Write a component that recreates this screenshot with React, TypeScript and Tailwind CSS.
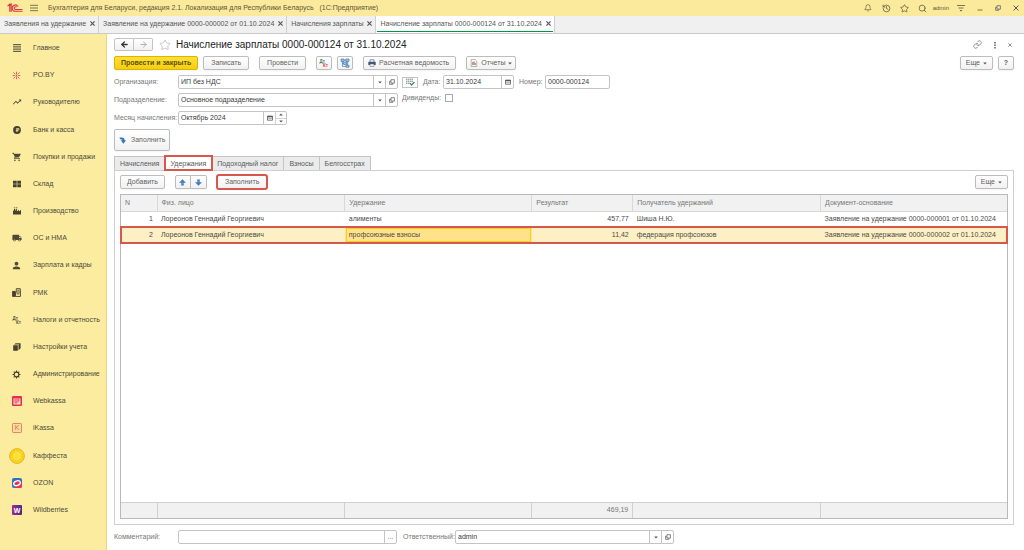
import { useState } from "react"
import type { ReactNode } from "react"
import clsx from "clsx"
import { ArrowLeft, ArrowRight, Bell, History, Link, Search, Star } from "lucide-react"
import { MdLocalShipping, MdPerson, MdShoppingCart, MdTrendingUp } from "react-icons/md"

interface Deduction {
  id: number
  person: string
  kind: string
  amount: string
  receiver: string
  basis: string
}

const deductions: Deduction[] = [
  {
    id: 1,
    person: "Лореонов Геннадий Георгиевич",
    kind: "алименты",
    amount: "457,77",
    receiver: "Шиша Н.Ю.",
    basis: "Заявление на удержание 0000-000001 от 01.10.2024",
  },
  {
    id: 2,
    person: "Лореонов Геннадий Георгиевич",
    kind: "профсоюзные взносы",
    amount: "11,42",
    receiver: "федерация профсоюзов",
    basis: "Заявление на удержание 0000-000002 от 01.10.2024",
  },
]

const windowTabs = [
  "Заявления на удержание",
  "Заявление на удержание 0000-000002 от 01.10.2024",
  "Начисления зарплаты",
  "Начисление зарплаты 0000-000124 от 31.10.2024",
]

const sections: { label: string; icon: ReactNode }[] = [
  { label: "Главное", icon: <MenuLinesIcon /> },
  { label: "PO.BY", icon: <BurstIcon /> },
  { label: "Руководителю", icon: <MdTrendingUp className="size-[10px]" /> },
  { label: "Банк и касса", icon: <CoinIcon /> },
  { label: "Покупки и продажи", icon: <MdShoppingCart className="size-[10px]" /> },
  { label: "Склад", icon: <WarehouseIcon /> },
  { label: "Производство", icon: <FactoryIcon /> },
  { label: "ОС и НМА", icon: <MdLocalShipping className="size-[10px]" /> },
  { label: "Зарплата и кадры", icon: <MdPerson className="size-[11px]" /> },
  { label: "РМК", icon: <RegisterIcon /> },
  { label: "Налоги и отчетность", icon: <DtKtIcon /> },
  { label: "Настройки учета", icon: <BooksIcon /> },
  { label: "Администрирование", icon: <GearIcon /> },
  { label: "Webkassa", icon: <WebkassaIcon /> },
  { label: "iKassa", icon: <IkassaIcon /> },
  { label: "Каффеста", icon: <KaffestaIcon /> },
  { label: "OZON", icon: <OzonIcon /> },
  { label: "Wildberries", icon: <WildberriesIcon /> },
]

const docTabs = ["Начисления", "Удержания", "Подоходный налог", "Взносы", "Белгосстрах"]

export default function App() {
  const [activeTab, setActiveTab] = useState("Удержания")
  const [selected, setSelected] = useState(2)

  return (
    <div className="flex min-h-screen flex-col bg-white font-['Liberation_Sans',Arial,sans-serif] text-[7px] leading-[10px] text-[#4a4a4a]">
      <TitleBar />
      <WindowTabs />
      <div className="flex flex-1">
        <Sidebar />
        <main className="flex min-w-0 flex-1 flex-col pt-1 pr-[10px] pb-[6px] pl-[7px]">
          <DocumentHeader />
          <CommandBar />
          <DocumentFields />

          <div className="mt-1">
            <button className="flex h-[22px] items-center gap-[5px] rounded-xs border border-[#bdbdbd] bg-linear-to-b from-white to-[#f1f1f1] px-1 text-[#666] shadow-xs">
              <FillIcon />
              <span>Заполнить</span>
            </button>
          </div>

          <div className="mt-[5px] flex" role="tablist">
            {docTabs.map((tab, i) => (
              <button
                key={tab}
                role="tab"
                aria-selected={tab === activeTab}
                onClick={() => setActiveTab(tab)}
                className={clsx(
                  "h-[14px] border-t border-r border-[#c4c4c4] px-[5px] text-[#5a5a5a]",
                  i === 0 && "border-l",
                  tab === activeTab
                    ? "relative z-10 bg-white outline-2 -outline-offset-1 outline-[#d8574c]"
                    : "bg-[#ebebeb]"
                )}
              >
                {tab}
              </button>
            ))}
          </div>

          <section className="flex flex-1 flex-col border border-[#cfcfcf] px-[5px] pt-1 pb-[5px]">
            <div className="flex items-center">
              <Button className="px-[6px]">Добавить</Button>
              <div className="ml-[10px] flex">
                <button aria-label="Вверх" className="flex h-[14px] w-4 items-center justify-center rounded-l-xs border border-[#bdbdbd] bg-linear-to-b from-white to-[#f1f1f1] shadow-xs">
                  <MoveIcon />
                </button>
                <button aria-label="Вниз" className="flex h-[14px] w-4 items-center justify-center rounded-r-xs border border-l-0 border-[#bdbdbd] bg-linear-to-b from-white to-[#f1f1f1] shadow-xs">
                  <MoveIcon className="rotate-180" />
                </button>
              </div>
              <Button className="ml-[10px] outline-2 -outline-offset-1 outline-[#d8574c]">Заполнить</Button>
              <Button className="ml-auto px-[5px]">
                Еще <Caret />
              </Button>
            </div>
            <DeductionsTable selected={selected} onSelect={setSelected} />
          </section>

          <div className="mt-[5px] flex items-center">
            <label htmlFor="comment" className="w-16 text-[#777]">Комментарий:</label>
            <Field id="comment" className="w-[219px]">
              <FieldButton label="Выбрать комментарий">...</FieldButton>
            </Field>
            <label htmlFor="responsible" className="ml-[6px] w-[52px] text-[#777]">Ответственный:</label>
            <Field id="responsible" value="admin" className="w-[219px]">
              <FieldButton label="Выбрать"><Caret /></FieldButton>
              <FieldButton label="Открыть"><OpenIcon /></FieldButton>
            </Field>
          </div>
        </main>
      </div>
    </div>
  )
}

function TitleBar() {
  return (
    <header className="flex h-4 items-center bg-[#fbea9c] pr-[5px] pl-[7px]">
      <LogoIcon />
      <button aria-label="Меню" className="ml-[7px]">
        <svg viewBox="0 0 8 8" className="size-2" stroke="#6b6446" strokeWidth="0.9">
          <path d="M0 1.3h8M0 4h8M0 6.7h8" />
        </svg>
      </button>
      <span className="ml-[10px] text-[#5c5538]">
        Бухгалтерия для Беларуси, редакция 2.1. Локализация для Республики Беларусь&nbsp;&nbsp; (1С:Предприятие)
      </span>
      <div className="ml-auto flex items-center text-[#5c5538]">
        <button aria-label="Уведомления" className="mr-[10px]"><Bell className="size-2" /></button>
        <button aria-label="История" className="mr-[9px]"><History className="size-[9px]" /></button>
        <button aria-label="Избранное" className="mr-[9px]"><Star className="size-[9px]" /></button>
        <button aria-label="Поиск" className="mr-[6px]"><Search className="size-[9px]" /></button>
        <span className="mr-2 text-[6px]">admin</span>
        <button aria-label="Сервис" className="mr-3">
          <svg viewBox="0 0 8 8" className="size-2" fill="none" stroke="currentColor" strokeWidth="0.8">
            <path d="M0 1.5h8M1.5 4h5" />
            <path d="M2.6 6h2.8L4 7.6z" fill="currentColor" stroke="none" />
          </svg>
        </button>
        <button aria-label="Свернуть" className="mr-3">
          <svg viewBox="0 0 6 6" className="size-[6px]" stroke="currentColor" strokeWidth="0.8"><path d="M0.5 5h5" /></svg>
        </button>
        <button aria-label="Развернуть" className="mr-3"><OpenIcon /></button>
        <button aria-label="Закрыть"><CrossIcon className="size-[6px]" /></button>
      </div>
    </header>
  )
}

function WindowTabs() {
  return (
    <nav className="flex h-[18px] border-b border-[#c9c9c9] bg-[#f0f0f0]">
      {windowTabs.map((tab, i) => {
        const active = i === windowTabs.length - 1
        return (
          <div key={tab} className={clsx("flex border-r border-[#cfcfcf] px-px", active && "bg-white")}>
            <div className={clsx("mb-px flex items-center gap-1 border-b pr-[2px] pl-[3px]", active ? "border-[#009646]" : "border-transparent")}>
              <a href="#" className="text-[#555]">{tab}</a>
              <button aria-label={`Закрыть ${tab}`}>
                <CrossIcon className="size-[5px]" bold />
              </button>
            </div>
          </div>
        )
      })}
    </nav>
  )
}

function Sidebar() {
  return (
    <aside className="flex w-[107px] shrink-0 flex-col border-r border-[#ead67e] bg-[#fbec9f]">
      <ul className="flex flex-1 flex-col justify-between pt-[2px] pb-7">
        {sections.map((section) => (
          <li key={section.label}>
            <a href="#" className="flex h-6 items-center whitespace-nowrap text-[#4d4938]">
              <span className="flex w-[33px] justify-center">{section.icon}</span>
              {section.label}
            </a>
          </li>
        ))}
      </ul>
    </aside>
  )
}

function DocumentHeader() {
  return (
    <div className="flex h-[13px] items-center">
      <div className="flex">
        <button aria-label="Назад" className="flex h-[13px] w-5 items-center justify-center rounded-l-xs border border-[#c4c4c4] bg-linear-to-b from-white to-[#f1f1f1]">
          <ArrowLeft className="size-[9px] text-[#333]" strokeWidth={3.5} />
        </button>
        <button aria-label="Вперед" className="flex h-[13px] w-[19px] items-center justify-center rounded-r-xs border border-l-0 border-[#c4c4c4] bg-linear-to-b from-white to-[#f1f1f1]">
          <ArrowRight className="size-[9px] text-[#aaa]" strokeWidth={2.5} />
        </button>
      </div>
      <button aria-label="В избранное" className="ml-[6px]">
        <Star className="size-3 text-[#b5b5b5]" strokeWidth={1.5} />
      </button>
      <h1 className="ml-[5px] text-[10px] leading-3 text-[#222]">Начисление зарплаты 0000-000124 от 31.10.2024</h1>
      <div className="ml-auto flex items-center gap-3 text-[#777]">
        <button aria-label="Получить ссылку"><Link className="size-[9px]" /></button>
        <button aria-label="Действия">
          <svg viewBox="0 0 2 8" className="h-2 w-[2px]" fill="#555">
            <path d="M0.3 1h1.4v1.4H0.3zM0.3 3.5h1.4v1.4H0.3zM0.3 6h1.4v1.4H0.3z" />
          </svg>
        </button>
        <button aria-label="Закрыть документ" className="mr-[2px]"><CrossIcon className="size-1" /></button>
      </div>
    </div>
  )
}

function CommandBar() {
  return (
    <div className="mt-[5px] flex items-center">
      <button className="h-[14px] rounded-xs border border-[#d9b700] bg-linear-to-b from-[#ffe033] to-[#f7cd0a] px-[6px] font-bold text-[#5e5113] shadow-xs">
        Провести и закрыть
      </button>
      <Button className="ml-[5px]">Записать</Button>
      <Button className="ml-[10px]">Провести</Button>
      <Button className="ml-[10px] w-4 px-0" label="Проводки"><DtKtIcon colored /></Button>
      <Button className="ml-[5px] w-4 px-0" label="Структура подчиненности"><StructureIcon /></Button>
      <Button className="ml-[10px] px-1"><PrinterIcon /> <span className="pr-[2px]">Расчетная ведомость</span></Button>
      <Button className="ml-[10px] px-[3px]"><ReportIcon /> Отчеты <Caret /></Button>
      <Button className="ml-auto px-[5px]">Еще <Caret /></Button>
      <Button className="ml-[5px] w-4 px-0 font-bold" label="Справка">?</Button>
    </div>
  )
}

function DocumentFields() {
  return (
    <div className="mt-[5px] flex gap-1">
      <div className="flex flex-col gap-1">
        <div className="flex items-center">
          <label htmlFor="org" className="w-16 text-[#777]">Организация:</label>
          <Field id="org" value="ИП без НДС" className="w-[220px]">
            <FieldButton label="Выбрать организацию"><Caret /></FieldButton>
            <FieldButton label="Открыть организацию"><OpenIcon /></FieldButton>
          </Field>
        </div>
        <div className="flex items-center">
          <label htmlFor="dept" className="w-16 text-[#777]">Подразделение:</label>
          <Field id="dept" value="Основное подразделение" className="w-[220px]">
            <FieldButton label="Выбрать подразделение"><Caret /></FieldButton>
            <FieldButton label="Открыть подразделение"><OpenIcon /></FieldButton>
          </Field>
        </div>
        <div className="flex items-center">
          <label htmlFor="month" className="w-16 whitespace-nowrap text-[#777]">Месяц начисления:</label>
          <Field id="month" value="Октябрь 2024" className="w-[109px]">
            <FieldButton label="Календарь"><CalendarIcon /></FieldButton>
            <div className="flex w-[11px] flex-col border-l border-[#d0d0d0]">
              <button aria-label="Следующий месяц" className="flex flex-1 items-center justify-center border-b border-[#d0d0d0]">
                <Caret className="rotate-180" />
              </button>
              <button aria-label="Предыдущий месяц" className="flex flex-1 items-center justify-center">
                <Caret />
              </button>
            </div>
          </Field>
        </div>
      </div>

      <div className="flex flex-col gap-[2px]">
        <div className="flex items-center">
          <button aria-label="Заполнение документа" className="flex h-[11px] w-4 items-center justify-center border border-[#c4c4c4] bg-white">
            <ListCheckIcon />
          </button>
          <label htmlFor="date" className="ml-[5px] w-5 text-[#777]">Дата:</label>
          <Field id="date" value="31.10.2024" className="w-[71px]">
            <FieldButton label="Календарь"><CalendarIcon /></FieldButton>
          </Field>
          <label htmlFor="number" className="ml-[5px] w-[26px] text-[#777]">Номер:</label>
          <Field id="number" value="0000-000124" className="w-[65px]" />
        </div>
        <div className="flex h-[14px] items-center gap-1">
          <label htmlFor="dividends" className="text-[#777]">Дивиденды:</label>
          <input id="dividends" type="checkbox" className="size-2 appearance-none border border-[#aaa] bg-white checked:bg-[#1a9a5c]" />
        </div>
      </div>
    </div>
  )
}

function DeductionsTable({ selected, onSelect }: { selected: number; onSelect: (id: number) => void }) {
  return (
    <div className="mt-[5px] grid flex-1 border border-[#b9b9b9]">
      <table className="h-full w-full table-fixed border-collapse text-left">
        <colgroup>
          <col className="w-9" />
          <col className="w-[21.2%]" />
          <col className="w-[21.1%]" />
          <col className="w-[11.4%]" />
          <col className="w-[21.2%]" />
          <col />
        </colgroup>
        <thead>
          <tr className="h-4 bg-[#f1f1f1] text-[#777]">
            {["N", "Физ. лицо", "Удержание", "Результат", "Получатель удержаний", "Документ-основание"].map((title) => (
              <th key={title} className="border-r border-b border-[#d8d8d8] px-1 py-0 font-normal last:border-r-0">
                {title}
              </th>
            ))}
          </tr>
        </thead>
        <tbody>
          {deductions.map((row) => {
            const active = row.id === selected
            return (
              <tr
                key={row.id}
                onClick={() => onSelect(row.id)}
                className={clsx("h-4", active && "bg-[#fdf0c4] outline-2 -outline-offset-1 outline-[#d8574c]")}
              >
                <td className="px-1 py-0 text-right">{row.id}</td>
                <td className="px-1 py-0">{row.person}</td>
                <td className={clsx("px-1 py-0", active && "bg-[#ffe28a] outline-1 -outline-offset-2 outline-[#f5cf1d]")}>
                  {row.kind}
                </td>
                <td className="px-1 py-0 text-right">{row.amount}</td>
                <td className="px-1 py-0">{row.receiver}</td>
                <td className="truncate px-1 py-0">{row.basis}</td>
              </tr>
            )
          })}
          <tr>
            <td colSpan={6} className="p-0"></td>
          </tr>
        </tbody>
        <tfoot>
          <tr className="h-4 bg-[#f1f1f1] text-[#777]">
            {["", "", "", "469,19", "", ""].map((total, i) => (
              <td key={i} className="border-t border-r border-[#d0d0d0] px-1 py-0 text-right last:border-r-0">
                {total}
              </td>
            ))}
          </tr>
        </tfoot>
      </table>
    </div>
  )
}

function Button({ children, className, label }: { children: ReactNode; className?: string; label?: string }) {
  return (
    <button
      aria-label={label}
      className={clsx(
        "flex h-[14px] items-center justify-center gap-[3px] rounded-xs border border-[#bdbdbd] bg-linear-to-b from-white to-[#f1f1f1] text-[#5f5f5f] shadow-xs",
        !className?.includes("px-") && "px-[7px]",
        className
      )}
    >
      {children}
    </button>
  )
}

function Field({ id, value = "", className, children }: { id: string; value?: string; className?: string; children?: ReactNode }) {
  return (
    <div className={clsx("flex h-[14px] rounded-xs border border-[#c4c4c4] bg-white", className)}>
      <input id={id} defaultValue={value} className="min-w-0 flex-1 px-[2px] text-[#3a3a3a] outline-none" />
      {children}
    </div>
  )
}

function FieldButton({ label, children }: { label: string; children: ReactNode }) {
  return (
    <button aria-label={label} className="flex w-3 items-center justify-center border-l border-[#c4c4c4] text-[#666]">
      {children}
    </button>
  )
}

function Caret({ className }: { className?: string }) {
  return (
    <svg viewBox="0 0 4 3" className={clsx("h-[3px] w-1", className)} fill="#555">
      <path d="M0.2 0.4h3.6L2 2.5z" />
    </svg>
  )
}

function CrossIcon({ className, bold }: { className?: string; bold?: boolean }) {
  return (
    <svg viewBox="0 0 6 6" className={className} stroke="#555" strokeWidth={bold ? 1.4 : 1}>
      <path d="M0.5 0.5l5 5M5.5 0.5l-5 5" />
    </svg>
  )
}

function OpenIcon() {
  return (
    <svg viewBox="0 0 6 6" className="size-[6px]" fill="none" stroke="#666" strokeWidth="0.8">
      <path d="M2 0.7h3.4v3.4H2zM2 2.2H0.6v3.1h3.2V4.1" />
    </svg>
  )
}

function CalendarIcon() {
  return (
    <svg viewBox="0 0 6 6" className="size-[6px]" fill="none" stroke="#555" strokeWidth="0.8">
      <path d="M0.5 1.2h5v4h-5z" />
      <path d="M0.5 1.6h5" strokeWidth="1.4" />
      <path d="M1.6 3.5h3" strokeDasharray="0.7 0.4" />
    </svg>
  )
}

function LogoIcon() {
  return (
    <svg viewBox="0 0 16 10" className="h-[10px] w-4" fill="none" stroke="#dc3545" strokeWidth="1.1">
      <path d="M0.5 3.2L2.8 1.2V8.8M2 3.2L4.2 1.2V8.8" />
      <path d="M11 3.6A3.1 3.1 0 1 0 8.6 8.2H15.5" />
      <path d="M9.7 4.2A1.4 1.4 0 1 0 8.6 6.5H15.5" />
    </svg>
  )
}

function FillIcon() {
  return (
    <svg viewBox="0 0 8 8" className="size-[7px]" fill="#3577b5">
      <path d="M0.3 0.6h2.8c2.2 0 3.3 1.2 3.3 3H8L5 7.6 2 3.6h1.9C3.9 3 3.4 2.9 2.6 2.9H1.8z" />
    </svg>
  )
}

function MoveIcon({ className }: { className?: string }) {
  return (
    <svg viewBox="0 0 8 8" className={clsx("size-[7px]", className)} fill="#3d82c4" stroke="#1f5f9e" strokeWidth="0.4">
      <path d="M4 0.6L7.4 4H5.3v1.2H2.7V4H0.6zM2.7 5.9h2.6v1.3H2.7z" />
    </svg>
  )
}

function PrinterIcon() {
  return (
    <svg viewBox="0 0 8 8" className="size-2" fill="none">
      <path d="M2 3V0.8h4V3" stroke="#5b6b80" strokeWidth="0.7" />
      <rect x="0.3" y="2.8" width="7.4" height="3.2" rx="0.6" fill="#3d5878" />
      <path d="M2 5h4v2.4H2z" fill="#fff" stroke="#5b6b80" strokeWidth="0.6" />
    </svg>
  )
}

function ReportIcon() {
  return (
    <svg viewBox="0 0 8 8" className="size-2" fill="none">
      <path d="M1.2 0.5h4l1.6 1.6v5.4H1.2z" stroke="#888" strokeWidth="0.6" />
      <path d="M2.8 3v3" stroke="#d64545" strokeWidth="0.9" />
      <path d="M4 2.4V6" stroke="#3b8a57" strokeWidth="0.9" />
      <path d="M5.2 3.8V6" stroke="#d64545" strokeWidth="0.9" />
    </svg>
  )
}

function StructureIcon() {
  return (
    <svg viewBox="0 0 10 10" className="size-[10px]" fill="none" stroke="#3f75ab" strokeWidth="0.7">
      <path d="M1 1h3v2.4H1zM5.8 1H9v2.4H5.8zM3.6 4.2h3v2.2h-3zM6 7.2h3v2H6z" fill="#a9c8e6" />
      <path d="M2.4 3.4v5H6M4 2.2h1.8M7.6 3.4v3.8M2.4 5.3h1.2" />
    </svg>
  )
}

function ListCheckIcon() {
  return (
    <svg viewBox="0 0 10 8" className="h-2 w-[10px]" fill="none">
      <path d="M1 1.2h7M1 3.2h7M1 5.2h4" stroke="#6f7a86" strokeWidth="1" strokeDasharray="1.4 0.5" />
      <path d="M5 5.2l1.6 1.8L9.4 4" stroke="#2f9a50" strokeWidth="1.2" />
    </svg>
  )
}

function DtKtIcon({ colored }: { colored?: boolean }) {
  return (
    <svg viewBox="0 0 10 10" className="size-[10px] font-bold" fill="#57513d">
      <text x="0.5" y="4.5" fontSize="4.5" fill={colored ? "#3d7a55" : undefined}>Дт</text>
      <text x="4" y="9" fontSize="4.5" fill={colored ? "#d64545" : undefined}>Кт</text>
    </svg>
  )
}

function MenuLinesIcon() {
  return (
    <svg viewBox="0 0 8 8" className="size-2" stroke="#45402f" strokeWidth="1">
      <path d="M0 0.7h8M0 2.9h8M0 5.1h8M0 7.3h8" />
    </svg>
  )
}

function BurstIcon() {
  return (
    <svg viewBox="0 0 10 10" className="size-[9px]" fill="none" stroke="#d8404f" strokeWidth="0.9">
      <path d="M5 0.8v3M5 6.2v3M0.8 5h2.4M6.8 5h2.4M1.6 1.6l2.2 2.2M8.4 1.6L6.2 3.8M1.6 8.4l2.2-2.2M8.4 8.4L6.2 6.2" />
      <circle cx="5" cy="5" r="0.7" fill="#d8404f" stroke="none" />
    </svg>
  )
}

function CoinIcon() {
  return (
    <svg viewBox="0 0 8 8" className="size-2">
      <circle cx="4" cy="4" r="3.9" fill="#45402f" />
      <text x="4" y="6" fontSize="5.5" fontWeight="bold" textAnchor="middle" fill="#fbec9f">₽</text>
    </svg>
  )
}

function WarehouseIcon() {
  return (
    <svg viewBox="0 0 8 8" className="size-2" fill="#45402f">
      <path d="M0 0.8h3.7v2.9H0zM4.3 0.8H8v2.9H4.3zM0 4.3h3.7v2.9H0zM4.3 4.3H8v2.9H4.3z" />
    </svg>
  )
}

function FactoryIcon() {
  return (
    <svg viewBox="0 0 8 8" className="size-2" fill="#45402f">
      <path d="M0 7.6V3.4h1V2h1.1v1.4h.7V2h1.1v2.4L6 2.8v1.6l2-1.6v4.8zM0.8 0.4h1.4v.9H.8zM2.9 0.4h1.5v.9H2.9z" />
    </svg>
  )
}

function RegisterIcon() {
  return (
    <svg viewBox="0 0 8 8" className="size-[9px]" fill="none" stroke="#45402f" strokeWidth="0.8">
      <path d="M0.5 3h2.3v4.5H0.5z" fill="#45402f" />
      <path d="M3 3.6h4.5v3.9H3zM3.8 3.4V0.6h3.6v3" />
      <path d="M4 5.2h2.6M4.8 2h1.8" />
    </svg>
  )
}

function BooksIcon() {
  return (
    <svg viewBox="0 0 8 8" className="size-2" fill="#45402f">
      <path d="M0.2 2.2h4.6v5.6H.2zM5.1 7V1.7H1.3v-.5h4.3V7zM6 6.2V.9H2.2V.3H7v5.9zM7.2 5.4V.3h.6v5.1z" />
    </svg>
  )
}

function GearIcon() {
  return (
    <svg viewBox="0 0 10 10" className="size-[9px]" fill="none" stroke="#45402f">
      <circle cx="5" cy="5" r="2.6" strokeWidth="1.2" />
      <path d="M5 0.6v1.6M5 7.8v1.6M0.6 5h1.6M7.8 5h1.6M1.9 1.9L3 3M7 7l1.1 1.1M8.1 1.9L7 3M3 7L1.9 8.1" strokeWidth="1.3" />
    </svg>
  )
}

function WebkassaIcon() {
  return (
    <svg viewBox="0 0 10 10" className="size-[10px]" fill="none">
      <rect width="10" height="10" rx="1" fill="#e5304c" />
      <path d="M1.5 2.5h7v6h-7z" fill="#fbd9d3" />
      <path d="M2 4h6M2 6h4M4 2.5v6M6.2 2.5v4" stroke="#e5304c" strokeWidth="0.7" />
    </svg>
  )
}

function IkassaIcon() {
  return (
    <svg viewBox="0 0 10 10" className="size-[10px]">
      <rect x="0.5" y="0.5" width="9" height="9" rx="0.8" fill="#fbdc9a" stroke="#d9705a" strokeWidth="0.8" />
      <text x="5" y="7.4" fontSize="7" textAnchor="middle" fill="#d9705a">K</text>
    </svg>
  )
}

function KaffestaIcon() {
  return (
    <svg viewBox="0 0 16 16" className="size-4">
      <circle cx="8" cy="8" r="7.4" fill="#fbd916" stroke="#d9a91c" strokeWidth="0.8" />
      <circle cx="8" cy="8" r="5" fill="#fde03a" stroke="#d9a91c" strokeWidth="0.6" strokeDasharray="1.5 0.7" />
    </svg>
  )
}

function OzonIcon() {
  return (
    <svg viewBox="0 0 10 10" className="size-[10px]">
      <rect width="10" height="10" rx="2" fill="#2f72c4" />
      <path d="M10 4v4a2 2 0 0 1-2 2H3z" fill="#ee2f55" />
      <ellipse cx="5" cy="5.2" rx="3.4" ry="2.3" transform="rotate(-20 5 5.2)" fill="#e8304f" stroke="#fff" strokeWidth="1.4" />
    </svg>
  )
}

function WildberriesIcon() {
  return (
    <svg viewBox="0 0 10 10" className="size-[10px]">
      <defs>
        <linearGradient id="wb" x1="0" x2="1">
          <stop offset="0" stopColor="#a32a98" />
          <stop offset="1" stopColor="#4b2a80" />
        </linearGradient>
      </defs>
      <rect width="10" height="10" rx="1" fill="url(#wb)" />
      <text x="5" y="7.6" fontSize="7" fontWeight="bold" textAnchor="middle" fill="#fff">W</text>
    </svg>
  )
}
